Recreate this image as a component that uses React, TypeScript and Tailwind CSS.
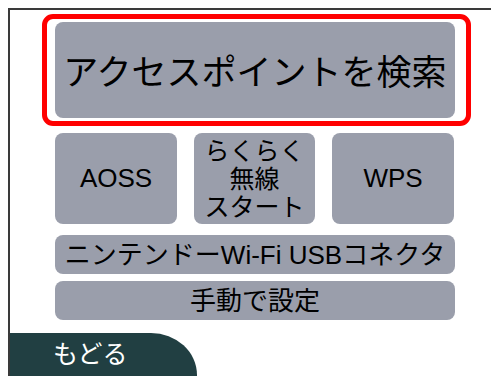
import React from 'react';

const font = { fontFamily: '"Liberation Sans", "Noto Sans CJK JP", sans-serif' };

function Btn({ children, className }: { children: React.ReactNode; className: string }) {
  return (
    <div className={`flex items-center justify-center rounded-[8px] bg-[#9a9eab] text-black text-center ${className}`}>
      {children}
    </div>
  );
}

export default function App() {
  return (
    <div className="w-[491px] h-[376px] bg-white overflow-hidden" style={font}>
      <div className="ml-[8px] mt-[8px] h-[368px] border-l-2 border-t-2 border-[#3a3a3a] flex flex-col">
        <div className="ml-[32px] mt-[4px] w-[429px] h-[112px] rounded-[11px] border-[5px] border-[#ff0000] pl-[8px] pt-[3px]">
          <Btn className="w-[400px] h-[96px] text-[35px] leading-none pt-[5px]">アクセスポイントを検索</Btn>
        </div>

        <div className="ml-[45px] mt-[7px] w-[400px] flex gap-[17px]">
          <Btn className="w-[122px] h-[91px] text-[26px]">AOSS</Btn>
          <Btn className="w-[121px] h-[91px] text-[25px] leading-[28px] flex-col">
            <span>らくらく</span>
            <span>無線</span>
            <span>スタート</span>
          </Btn>
          <Btn className="w-[122px] h-[91px] text-[26px]">WPS</Btn>
        </div>

        <Btn className="ml-[45px] mt-[11px] w-[400px] h-[39px] text-[26px] leading-none whitespace-nowrap">
          ニンテンドーWi-Fi USBコネクタ
        </Btn>
        <Btn className="ml-[45px] mt-[7px] w-[400px] h-[39px] text-[26px] leading-none">手動で設定</Btn>

        <div className="mt-[13px] w-[187px] flex-1 bg-[#213f42] rounded-tr-[46px_42px] pl-[43px] pt-[9px] text-white text-[25px] leading-none">
          もどる
        </div>
      </div>
    </div>
  );
}
